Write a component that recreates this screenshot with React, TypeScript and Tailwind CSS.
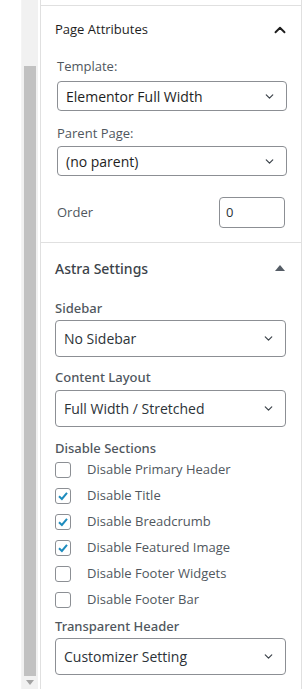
import { ChevronDown, ChevronUp } from "lucide-react";

const sections = [
  { label: "Disable Primary Header", checked: false },
  { label: "Disable Title", checked: true },
  { label: "Disable Breadcrumb", checked: true },
  { label: "Disable Featured Image", checked: true },
  { label: "Disable Footer Widgets", checked: false },
  { label: "Disable Footer Bar", checked: false },
];

const labelFont = { fontFamily: '"Noto Sans", "Open Sans", sans-serif' };

function Select({ value, tall }: { value: string; tall?: boolean }) {
  return (
    <div
      className={
        tall
          ? "flex h-[37px] items-center justify-between rounded-[4px] border border-[#8c8f94] pl-[8px] pr-[10px] text-[14px] text-[#2c3338]"
          : "flex h-[30px] items-center justify-between rounded-[4px] border border-[#8c8f94] pl-[8px] pr-[10px] text-[14px] text-[#1e1e1e]"
      }
    >
      <span>{value}</span>
      <ChevronDown size={13} strokeWidth={2.25} className="text-[#3c434a]" />
    </div>
  );
}

function Checkbox({ checked }: { checked: boolean }) {
  return (
    <div className="flex h-[16px] w-[16px] items-center justify-center rounded-[3px] border border-[#8c8f94] bg-white">
      {checked && (
        <svg width="12" height="12" viewBox="0 0 12 12">
          <path d="M2 6.2 L4.9 9 L10 2.8" fill="none" stroke="#1e8cbe" strokeWidth="2" />
        </svg>
      )}
    </div>
  );
}

export default function App() {
  return (
    <div
      className="flex h-[689px] w-[305px] overflow-hidden bg-white"
      style={{ fontFamily: '"Open Sans", "Noto Sans", sans-serif' }}
    >
      {/* left page strip */}
      <div className="w-[22px] border-r border-[#f4f4f4]" />

      {/* scrollbar */}
      <div className="flex w-[16px] flex-col bg-[#f1f1f1]">
        <div className="h-[66px]" />
        <div className="mx-[2px] h-[610px] bg-[#c1c1c1]" />
        <div className="flex flex-1 items-center justify-center">
          <svg width="8" height="5" viewBox="0 0 8 5">
            <path d="M0 0 H8 L4 5 Z" fill="#a3a3a3" />
          </svg>
        </div>
      </div>

      <div className="w-[2px]" />

      {/* sidebar panel */}
      <div className="flex w-[262px] flex-col border-x border-[#e0e0e0]">
        <div className="h-[6px] border-b border-[#e0e0e0]" />

        {/* Page Attributes */}
        <div className="border-b border-[#e0e0e0] pl-[14px] pr-[14px] pb-[14px]">
          <div className="flex h-[48px] items-center justify-between text-[13px] text-[#1e1e1e]">
            <span>Page Attributes</span>
            <ChevronUp size={18} strokeWidth={2.5} className="mr-[-2px]" />
          </div>
          <div className="pl-[2px]">
            <div className="mt-[3px] text-[13px] leading-[18px] text-[#50575e]">Template:</div>
            <div className="mt-[6px]">
              <Select value="Elementor Full Width" />
            </div>
            <div className="mt-[13px] text-[13px] leading-[18px] text-[#50575e]">Parent Page:</div>
            <div className="mt-[4px]">
              <Select value="(no parent)" />
            </div>
            <div className="mt-[21px] flex items-center justify-between">
              <span className="text-[13px] text-[#50575e]">Order</span>
              <div className="mr-[2px] flex h-[31px] w-[66px] items-center rounded-[4px] border border-[#8c8f94] pl-[6px] text-[13px] text-[#2c3338]">
                0
              </div>
            </div>
          </div>
        </div>

        {/* Astra Settings */}
        <div className="pl-[14px] pr-[15px]">
          <div
            className="flex h-[50px] items-center justify-between text-[14px] font-medium text-[#3c434a]"
            style={labelFont}
          >
            <span>Astra Settings</span>
            <svg width="10" height="6" viewBox="0 0 10 6" className="mr-[1px]">
              <path d="M0 6 L5 0 L10 6 Z" fill="#555d66" />
            </svg>
          </div>
          <div className="mt-[6px] text-[13px] font-medium leading-[18px] text-[#50575e]" style={labelFont}>
            Sidebar
          </div>
          <div className="mt-[3px]">
            <Select value="No Sidebar" tall />
          </div>
          <div className="mt-[11px] text-[13px] font-medium leading-[18px] text-[#50575e]" style={labelFont}>
            Content Layout
          </div>
          <div className="mt-[4px]">
            <Select value="Full Width / Stretched" tall />
          </div>
          <div className="mt-[12px] text-[13px] font-medium leading-[18px] text-[#50575e]" style={labelFont}>
            Disable Sections
          </div>
          <div className="flex flex-col">
            {sections.map((s) => (
              <div key={s.label} className="flex h-[26px] items-center">
                <Checkbox checked={s.checked} />
                <span className="ml-[16px] text-[13px] text-[#50575e]">{s.label}</span>
              </div>
            ))}
          </div>
          <div className="mt-[4px] text-[13px] font-medium leading-[18px] text-[#50575e]" style={labelFont}>
            Transparent Header
          </div>
          <div className="mt-[3px]">
            <Select value="Customizer Setting" tall />
          </div>
        </div>
      </div>
    </div>
  );
}
